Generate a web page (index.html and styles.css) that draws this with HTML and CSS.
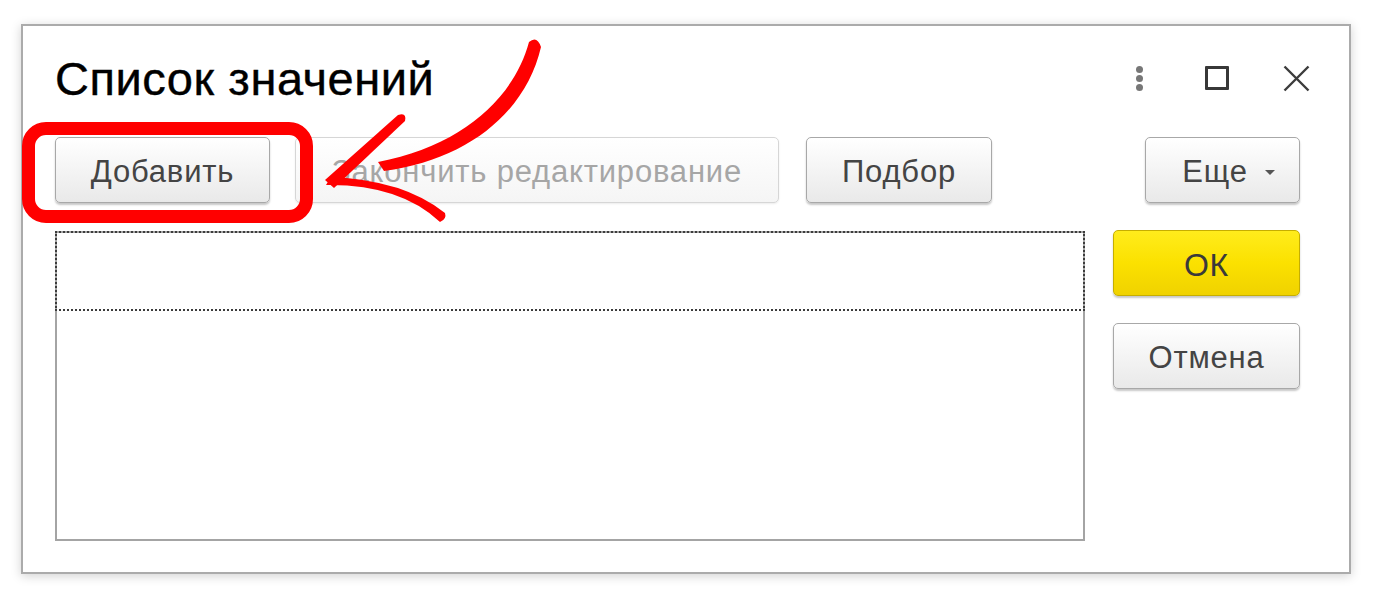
FILE: index.html
```html
<!DOCTYPE html>
<html lang="ru">
<head>
<meta charset="utf-8">
<title>Список значений</title>
<link rel="stylesheet" href="styles.css">
</head>
<body>
<div class="window">
  <div class="header">
    <h1 class="title">Список значений</h1>
    <div class="controls">
      <span class="ctl ctl-more"><i></i><i></i><i></i></span>
      <span class="ctl ctl-max"><span class="sq"></span></span>
      <span class="ctl ctl-close">
        <svg width="27" height="27" viewBox="0 0 27 27"><path d="M1.5 1.5 L25.5 25.5 M25.5 1.5 L1.5 25.5" stroke="#3c3c3c" stroke-width="2.4" fill="none"/></svg>
      </span>
    </div>
  </div>
  <div class="toolbar">
    <button class="btn btn-add">Добавить</button>
    <button class="btn btn-finish" disabled>Закончить редактирование</button>
    <button class="btn btn-pick">Подбор</button>
    <button class="btn btn-more">Еще <span class="caret"></span></button>
  </div>
  <div class="body">
    <div class="table">
      <div class="row-focus"></div>
    </div>
    <div class="side">
      <button class="btn btn-ok">ОК</button>
      <button class="btn btn-cancel">Отмена</button>
    </div>
  </div>
</div>
<div class="highlight"></div>
<svg class="arrow" width="1373" height="596" viewBox="0 0 1373 596">
  <path fill="#f00" d="M529 42 C514 98 462 146 378 162 L384 171 C468 160 526 112 541 47 Q537 35 529 42 Z"/>
  <path fill="#f00" d="M325 180 L398 115 Q407 112 405 121 L334 188 Z"/>
  <path fill="#f00" d="M326 185 Q400 184 440 222 Q447 219 445 213 Q404 180 331 177 Z"/>
</svg>
</body>
</html>
```

FILE: styles.css
```css
html, body {
  margin: 0;
  padding: 0;
  background: #ffffff;
}
body {
  width: 1373px;
  height: 596px;
  overflow: hidden;
  position: relative;
  font-family: "Liberation Sans", Arial, sans-serif;
}
.window {
  margin: 24px 0 0 21px;
  width: 1330px;
  height: 550px;
  box-sizing: border-box;
  border: 2px solid #ababab;
  background: #fff;
  box-shadow: 0 2px 10px rgba(0,0,0,0.18);
  padding: 0 49px 0 32px;
  display: flex;
  flex-direction: column;
}
.header {
  display: flex;
  align-items: flex-start;
  justify-content: space-between;
  padding-top: 28px;
  height: 111px;
  box-sizing: border-box;
}
.title {
  margin: 0;
  font-weight: normal;
  font-size: 47px;
  line-height: 50px;
  color: #000;
  letter-spacing: 0.55px;
  -webkit-text-stroke: 0.4px #000;
}
.controls {
  display: flex;
  align-items: center;
  margin-right: -10px;
  margin-top: 9px;
}
.ctl {
  display: flex;
  align-items: center;
  justify-content: center;
  height: 30px;
}
.ctl-more {
  flex-direction: column;
  gap: 2px;
  width: 8px;
  margin-right: 62px;
}
.ctl-more i {
  display: block;
  width: 7px;
  height: 7px;
  border-radius: 50%;
  background: #777;
}
.ctl-max {
  width: 24px;
  margin-right: 54px;
}
.ctl-max .sq {
  width: 18px;
  height: 18px;
  border: 3px solid #383838;
  border-radius: 1px;
}
.ctl-close {
  width: 27px;
}
.toolbar {
  display: flex;
  align-items: center;
  height: 66px;
}
.btn {
  font-family: "Liberation Sans", Arial, sans-serif;
  font-size: 31px;
  letter-spacing: 0.8px;
  color: #444;
  height: 66px;
  box-sizing: border-box;
  border: 1px solid #a8a8a8;
  border-radius: 5px;
  background: linear-gradient(#ffffff, #f4f4f4 50%, #e9e9e9);
  box-shadow: 0 2px 2px rgba(0,0,0,0.22);
  padding: 4px 0 0 0;
  display: flex;
  align-items: center;
  justify-content: center;
}
.btn-add { width: 215px; }
.btn-finish {
  width: 484px;
  margin-left: 25px;
  color: #a6a6a6;
  border-color: #d6d6d6;
  background: linear-gradient(#ffffff, #f5f5f5);
  box-shadow: 0 1px 2px rgba(0,0,0,0.08);
}
.btn-pick {
  width: 186px;
  margin-left: 27px;
}
.btn-more {
  width: 155px;
  margin-left: auto;
  padding-left: 12px;
  gap: 17px;
}
.caret {
  width: 0;
  height: 0;
  border-left: 5px solid transparent;
  border-right: 5px solid transparent;
  border-top: 5px solid #555;
}
.body {
  display: flex;
  margin-top: 28px;
  gap: 28px;
}
.table {
  width: 1030px;
  height: 310px;
  box-sizing: border-box;
  border: 2px solid #a4a4a4;
  background: #fff;
}
.row-focus {
  margin: -2px -2px 0 -2px;
  height: 80px;
  box-sizing: border-box;
  border: 2px dotted #3c3c3c;
}
.side {
  display: flex;
  flex-direction: column;
  gap: 27px;
  width: 187px;
  margin-top: -1px;
}
.btn-ok {
  width: 187px;
  background: linear-gradient(#ffec1c, #fbe100 50%, #f0d200);
  border-color: #c6ae00;
  color: #3a3a3a;
  font-size: 32px;
}
.btn-cancel {
  width: 187px;
}
.highlight {
  position: absolute;
  left: 22px;
  top: 122px;
  width: 291px;
  height: 101px;
  box-sizing: border-box;
  border: 13px solid #ff0000;
  border-radius: 24px;
}
.arrow {
  position: absolute;
  left: 0;
  top: 0;
}
```
